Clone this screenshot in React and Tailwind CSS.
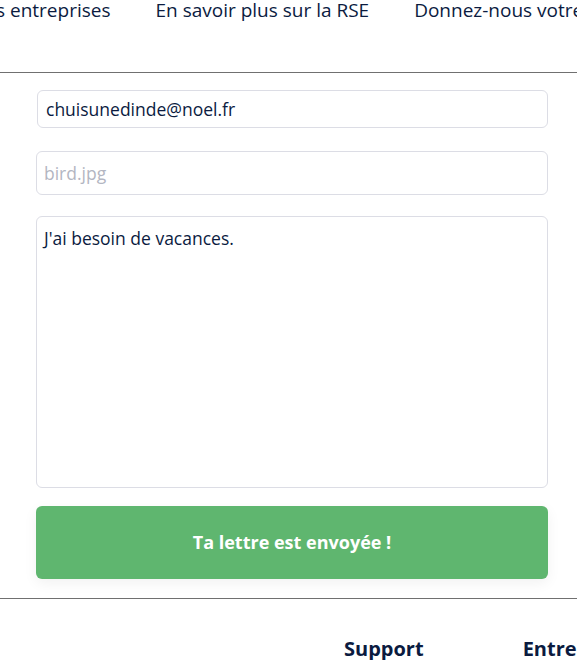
import React from 'react';

const font = { fontFamily: '"Open Sans", "Noto Sans", sans-serif' };

const App = () => {
  return (
    <div className="w-[577px] h-[660px] overflow-hidden bg-white text-[#0b1b3f]" style={font}>
      {/* Top navigation, scrolled off the left edge */}
      <nav className="h-[73px] border-b border-[#707070] overflow-hidden">
        <div className="flex gap-[45px] whitespace-nowrap text-[19px] leading-[22px] -ml-[4px] -mt-[1px]">
          <span>s entreprises</span>
          <span>En savoir plus sur la RSE</span>
          <span>Donnez-nous votre avis</span>
        </div>
      </nav>

      {/* Contact form */}
      <form className="flex flex-col pl-[36px] pr-[29px] pt-[17px] pb-[19px]">
        <input
          type="email"
          defaultValue="chuisunedinde@noel.fr"
          className="ml-[1px] h-[38px] px-[8px] border border-[#dcdde5] rounded-[6px] text-[17.5px] text-[#0b1b3f] outline-none"
        />
        <input
          type="text"
          placeholder="bird.jpg"
          className="mt-[23px] h-[44px] px-[7px] border border-[#dcdde5] rounded-[6px] text-[17.5px] placeholder:text-[#b3b6c2] outline-none"
        />
        <textarea
          defaultValue="J'ai besoin de vacances."
          className="mt-[21px] h-[272px] px-[7px] py-[9px] border border-[#dcdde5] rounded-[6px] text-[17.5px] leading-[24px] text-[#0b1b3f] resize-none outline-none"
        />
        <button
          type="button"
          className="mt-[18px] h-[73px] rounded-[6px] bg-[#5fb66f] text-white font-bold text-[18px] shadow-[0_4px_14px_rgba(0,0,0,0.06)]"
        >
          Ta lettre est envoyée !
        </button>
      </form>

      {/* Footer */}
      <footer className="border-t border-[#707070] pt-[38px]">
        <div className="flex gap-[99px] pl-[344px] whitespace-nowrap font-bold text-[20px] leading-[24px]">
          <span>Support</span>
          <span>Entreprise</span>
        </div>
      </footer>
    </div>
  );
};

export default App;
